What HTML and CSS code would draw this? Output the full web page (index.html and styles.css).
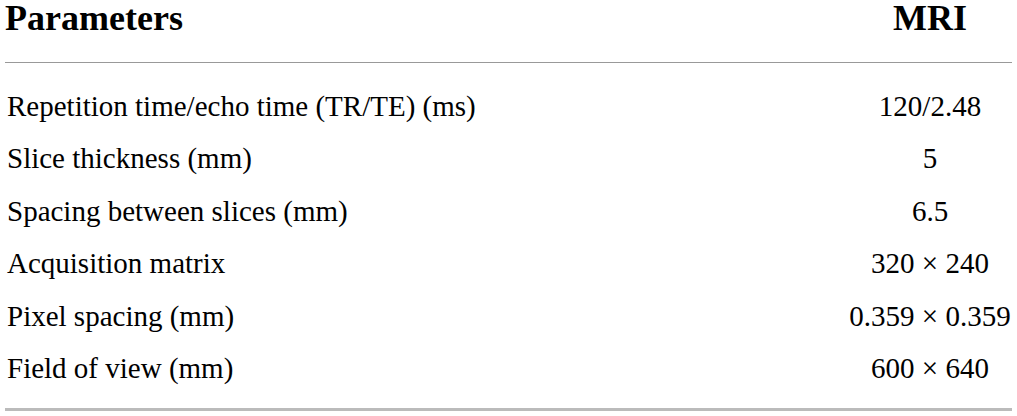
FILE: index.html
```html
<!DOCTYPE html>
<html>
<head>
<meta charset="utf-8">
<link rel="stylesheet" href="styles.css">
</head>
<body>
<div class="table">
  <div class="head">
    <div class="cell">Parameters</div>
    <div class="cell val">MRI</div>
  </div>
  <div class="body">
    <div class="row"><div class="cell">Repetition time/echo time (TR/TE) (ms)</div><div class="cell val">120/2.48</div></div>
    <div class="row"><div class="cell">Slice thickness (mm)</div><div class="cell val">5</div></div>
    <div class="row"><div class="cell">Spacing between slices (mm)</div><div class="cell val">6.5</div></div>
    <div class="row"><div class="cell">Acquisition matrix</div><div class="cell val">320 × 240</div></div>
    <div class="row"><div class="cell">Pixel spacing (mm)</div><div class="cell val">0.359 × 0.359</div></div>
    <div class="row"><div class="cell">Field of view (mm)</div><div class="cell val">600 × 640</div></div>
  </div>
</div>
</body>
</html>
```
FILE: styles.css
```css
html, body {
  margin: 0;
  padding: 0;
  background: #fff;
}
body {
  font-family: "Liberation Serif", "Times New Roman", serif;
  color: #000;
}
.table {
  margin-left: 5px;
  width: 1007px;
}
.head, .row {
  display: grid;
  grid-template-columns: 1fr 164px;
}
.head {
  font-weight: bold;
  font-size: 36px;
  line-height: 36px;
  padding-bottom: 26px;
  border-bottom: 1px solid #999;
}
.body {
  padding-top: 17px;
  padding-bottom: 14px;
  border-bottom: 3px solid #bbb;
  font-size: 29px;
  line-height: 52.4px;
}
.row .cell:first-child {
  padding-left: 2px;
}
.val {
  text-align: center;
}
```
